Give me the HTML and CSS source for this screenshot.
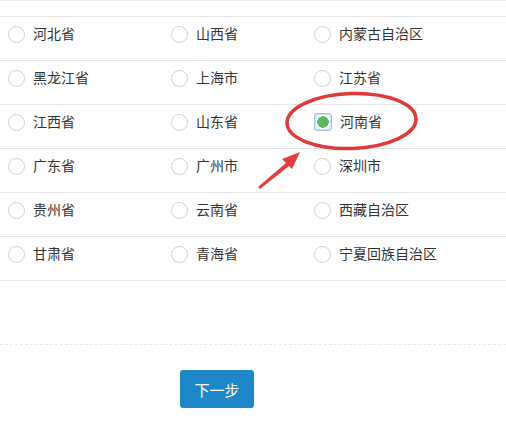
FILE: index.html
```html
<!DOCTYPE html>
<html lang="zh-CN">
<head>
    <meta charset="UTF-8">
    <title>选择省份</title>
    <link rel="stylesheet" href="styles.css">
</head>
<body>
    <div class="page">
        <div class="top-gap"></div>
        <div class="region-list">
            <div class="region-row">
                <label class="option"><span class="radio"></span>河北省</label>
                <label class="option"><span class="radio"></span>山西省</label>
                <label class="option"><span class="radio"></span>内蒙古自治区</label>
            </div>
            <div class="region-row">
                <label class="option"><span class="radio"></span>黑龙江省</label>
                <label class="option"><span class="radio"></span>上海市</label>
                <label class="option"><span class="radio"></span>江苏省</label>
            </div>
            <div class="region-row">
                <label class="option"><span class="radio"></span>江西省</label>
                <label class="option"><span class="radio"></span>山东省</label>
                <label class="option"><span class="radio checked"></span>河南省</label>
            </div>
            <div class="region-row">
                <label class="option"><span class="radio"></span>广东省</label>
                <label class="option"><span class="radio"></span>广州市</label>
                <label class="option"><span class="radio"></span>深圳市</label>
            </div>
            <div class="region-row">
                <label class="option"><span class="radio"></span>贵州省</label>
                <label class="option"><span class="radio"></span>云南省</label>
                <label class="option"><span class="radio"></span>西藏自治区</label>
            </div>
            <div class="region-row">
                <label class="option"><span class="radio"></span>甘肃省</label>
                <label class="option"><span class="radio"></span>青海省</label>
                <label class="option"><span class="radio"></span>宁夏回族自治区</label>
            </div>
        </div>

        <div class="footer">
            <button class="next-btn">下一步</button>
        </div>

        <!-- annotation: red circle + arrow pointing at the selected item -->
        <svg class="mark" width="506" height="421" viewBox="0 0 506 421">
            <ellipse cx="351.5" cy="121" rx="64.5" ry="27.5" fill="none" stroke="#e0393a" stroke-width="3.5" transform="rotate(-2 351.5 121)"/>
            <path d="M258 187 L286 163 L282 159 L300 152 L292 169 L289 166 L260 189 Z" fill="#e63c3c"/>
        </svg>
    </div>
</body>
</html>
```

FILE: styles.css
```css
body {
    margin: 0;
    font-family: "Noto Sans CJK SC", "Noto Sans", sans-serif;
    font-size: 14px;
    color: #333;
    background: #fff;
}

.page {
    position: relative;
    width: 506px;
    height: 421px;
    overflow: hidden;
}

.top-gap {
    height: 15px;
    border-top: 1px solid #ececec;
}

.region-list {
    border-bottom: 1px solid #e6e6e6;
}

.region-row {
    display: grid;
    grid-template-columns: 163px 143px 1fr;
    height: 43px;
    padding-left: 8px;
    border-top: 1px solid #e6e6e6;
    box-sizing: content-box;
}

.option {
    display: flex;
    align-items: flex-start;
    gap: 8px;
    height: 18px;
    margin-top: 7px;
    line-height: 18px;
    white-space: nowrap;
}

.radio {
    width: 15px;
    height: 15px;
    margin-top: 2px;
    border: 1px solid #cfcfcf;
    border-radius: 50%;
    background: #fff;
    flex-shrink: 0;
}

.radio.checked {
    width: 16px;
    height: 16px;
    margin-top: 1px;
    border: 1px solid #9cc3ea;
    border-radius: 3px;
    background: radial-gradient(circle, #5cb85c 0, #5cb85c 5.5px, #fff 6px, #fff 7px, #e3eef9 7.5px);
    box-shadow: inset 0 0 0 1px #cfe1f4;
}

.footer {
    margin-top: 63px;
    border-top: 1px dashed #e8e8e8;
    padding: 25px 0 0 180px;
}

.next-btn {
    width: 74px;
    height: 38px;
    border: none;
    border-radius: 3px;
    background: #1e87c9;
    color: #fff;
    font-family: "Noto Sans CJK SC", sans-serif;
    font-size: 15px;
    cursor: pointer;
}

.mark {
    position: absolute;
    top: 0;
    left: 0;
    pointer-events: none;
}
```
